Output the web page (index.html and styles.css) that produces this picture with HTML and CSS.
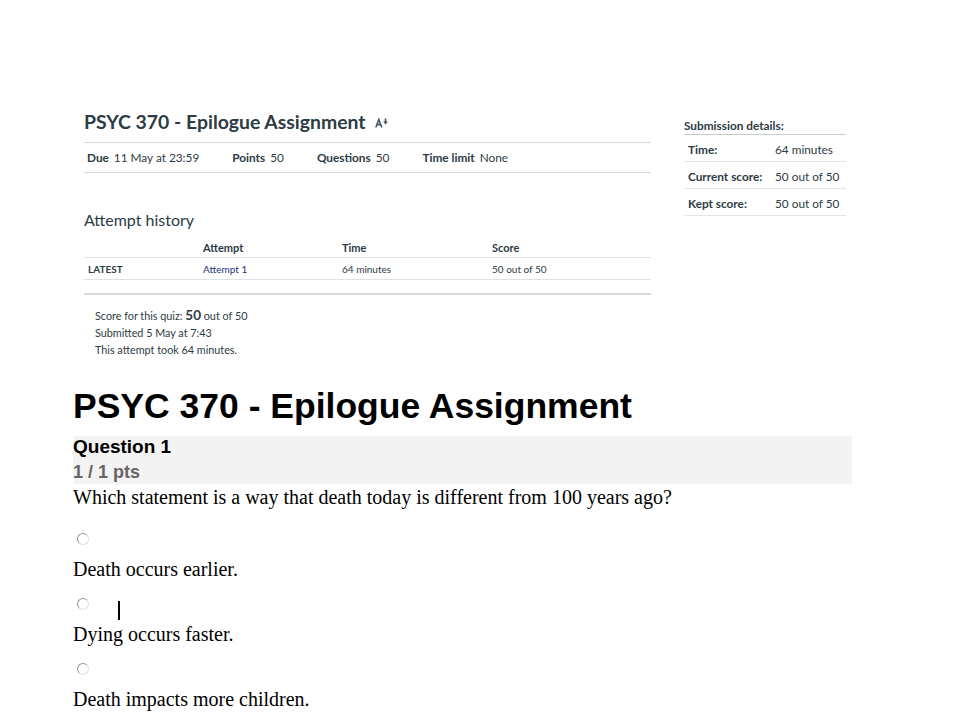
FILE: index.html
```html
<!DOCTYPE html>
<html>
<head>
<meta charset="utf-8">
<link rel="stylesheet" href="styles.css">
</head>
<body>
<div class="shot">
  <div class="main">
    <div class="title-row">
      <h2 class="quiz-title">PSYC 370 - Epilogue Assignment</h2>
      <svg class="ico" width="14" height="10" viewBox="0 0 14 10"><path d="M0.8 9.5 L3.8 1.5 L6.8 9.5 M2 6.6 H5.6" fill="none" stroke="#4a5660" stroke-width="1.6"/><path d="M10.5 0.5 V4" stroke="#4a5660" stroke-width="1.6"/><path d="M8 3.5 H13 L10.5 6.5 Z" fill="#4a5660"/></svg>
    </div>
    <ul class="meta">
      <li><b>Due</b> 11 May at 23:59</li>
      <li><b>Points</b> 50</li>
      <li><b>Questions</b> 50</li>
      <li><b>Time limit</b> None</li>
    </ul>
    <h3 class="hist">Attempt history</h3>
    <table class="att">
      <thead><tr><th class="c1"></th><th class="c2">Attempt</th><th class="c3">Time</th><th class="c4">Score</th></tr></thead>
      <tbody><tr><td class="latest">LATEST</td><td><span class="lnk">Attempt 1</span></td><td>64 minutes</td><td>50 out of 50</td></tr></tbody>
    </table>
    <div class="sep"></div>
    <div class="summary">
      <div>Score for this quiz: <span class="big">50</span> out of 50</div>
      <div>Submitted 5 May at 7:43</div>
      <div>This attempt took 64 minutes.</div>
    </div>
  </div>
  <aside class="side">
    <div class="side-h">Submission details:</div>
    <div class="srow"><span class="sl">Time:</span><span>64 minutes</span></div>
    <div class="srow"><span class="sl">Current score:</span><span>50 out of 50</span></div>
    <div class="srow"><span class="sl">Kept score:</span><span>50 out of 50</span></div>
  </aside>
</div>
<div class="print">
  <h1 class="ptitle">PSYC 370 - Epilogue Assignment</h1>
  <div class="qhead">
    <div class="qname">Question 1</div>
    <div class="qpts">1 / 1 pts</div>
  </div>
  <div class="qtext">Which statement is a way that death today is different from 100 years ago?</div>
  <div class="opt"><span class="radio"></span></div>
  <div class="ans">Death occurs earlier.</div>
  <div class="opt"><span class="radio"></span><span class="caret"></span></div>
  <div class="ans">Dying occurs faster.</div>
  <div class="opt"><span class="radio"></span></div>
  <div class="ans">Death impacts more children.</div>
</div>
</body>
</html>
```
FILE: styles.css
```css
html, body { margin: 0; padding: 0; background: #fff; }
body { font-family: "Liberation Serif", "Times New Roman", serif; color: #000; overflow: hidden; }

.shot { display: flex; padding: 110px 0 0 84px; font-family: Lato, "Liberation Sans", sans-serif; color: #2d3b45; }
.main { width: 567px; }
.title-row { display: flex; align-items: center; height: 24px; }
.quiz-title { margin: 0; font-size: 19.4px; font-weight: 700; line-height: 24px; color: #2d3b45; }
.ico { margin-left: 9px; margin-top: 1px; }
.meta { list-style: none; margin: 8px 0 0; padding: 0 0 0 3px; display: flex; height: 29px; align-items: center; border-top: 1px solid #d6dadd; border-bottom: 1px solid #d6dadd; font-size: 11.8px; }
.meta li { margin-right: 33px; }
.meta b { font-weight: 700; margin-right: 2px; }
.hist { margin: 37px 0 0; font-size: 16px; font-weight: 400; line-height: 20px; }
.att { margin-top: 8px; width: 567px; border-collapse: collapse; font-size: 10px; }
.att th { text-align: left; font-size: 11px; font-weight: 700; padding: 0 4px; height: 19px; border-bottom: 1px solid #dfe2e4; }
.att td { padding: 0 4px; height: 21px; border-bottom: 1px solid #dfe2e4; }
.att .c1 { width: 107px; }
.att .c2 { width: 131px; }
.att .c3 { width: 142px; }
.latest { font-weight: 700; }
.lnk { color: #22357f; }
.sep { height: 2px; background: #d6dadd; margin-top: 13px; }
.summary { padding: 12px 0 0 11px; font-size: 10.8px; line-height: 17px; }
.big { font-size: 13.5px; font-weight: 700; }

.side { width: 162px; margin-left: 33px; padding-top: 7px; font-family: Lato, "Liberation Sans", sans-serif; font-size: 11.8px; }
.side-h { font-weight: 700; height: 17px; line-height: 17px; border-bottom: 1px solid #c7cdd1; }
.srow { display: flex; height: 24px; align-items: center; padding: 2px 0 0 4px; border-bottom: 1px solid #e3e6e8; }
.sl { font-weight: 700; width: 87px; }

.print { padding: 0 0 0 73px; }
.ptitle { margin: 28px 0 0; font-family: "Liberation Sans", Arial, sans-serif; font-size: 35.5px; font-weight: 700; line-height: 40px; color: #000; }
.qhead { margin-top: 10px; width: 779px; height: 48px; background: #f3f3f3; font-family: "Liberation Sans", Arial, sans-serif; font-weight: 700; font-size: 19px; }
.qname { line-height: 22px; height: 24px; color: #000; }
.qpts { line-height: 25px; height: 24px; color: #666; font-size: 18px; }
.qtext { font-size: 20px; line-height: 26px; margin-bottom: 9px; }
.opt { position: relative; height: 35px; }
.radio { position: absolute; left: 4px; top: 14px; width: 10px; height: 10px; border-radius: 50%; border: 1px solid #999; border-right-color: #e0e0e0; border-bottom-color: #e0e0e0; background: #fff; }
.caret { position: absolute; left: 45px; top: 17px; width: 2px; height: 19px; background: #000; }
.ans { font-size: 20px; line-height: 30px; }
```
